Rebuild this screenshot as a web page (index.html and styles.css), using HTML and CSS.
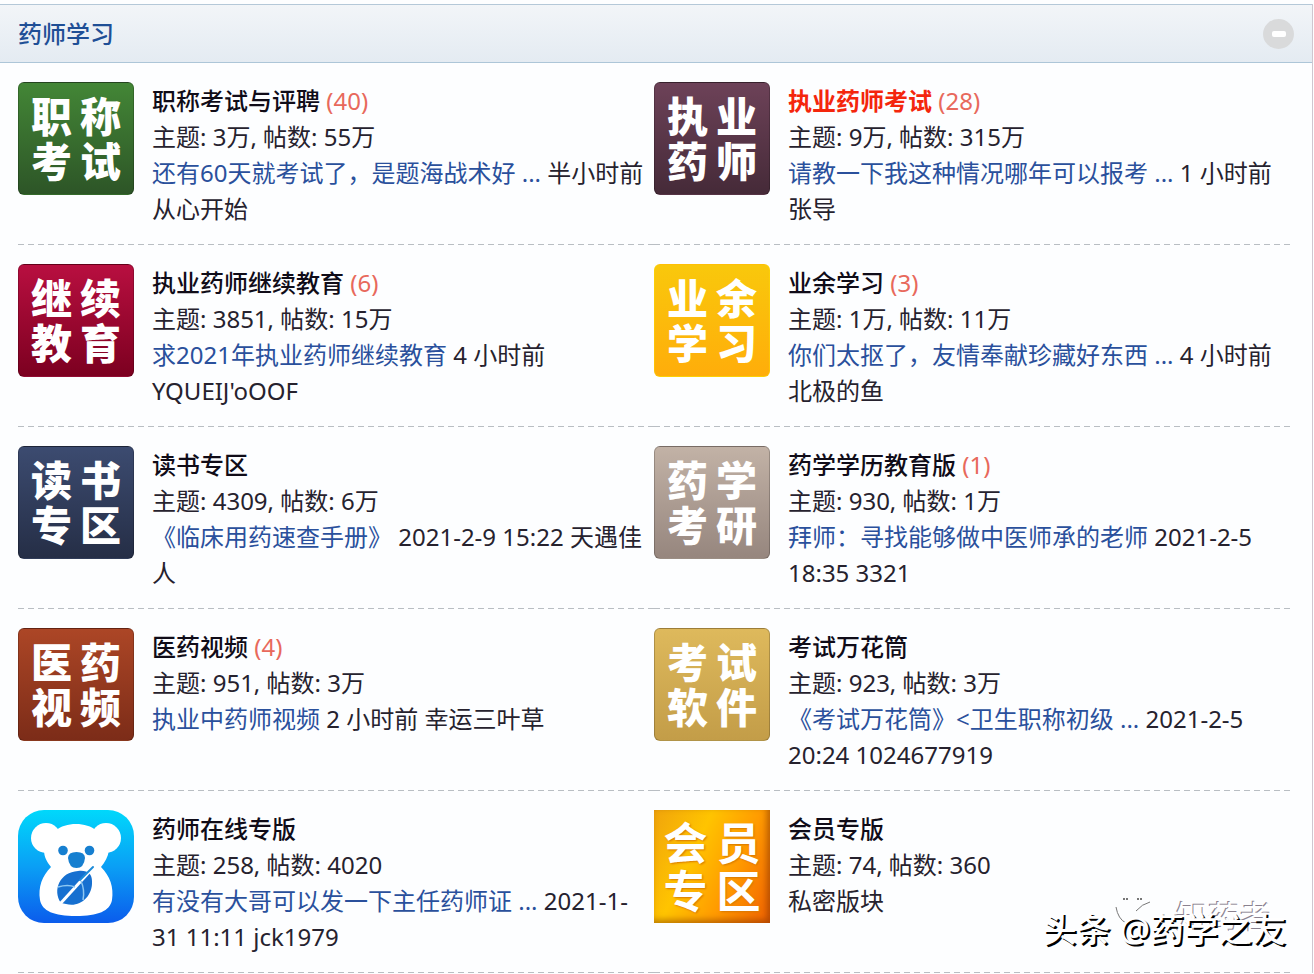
FILE: index.html
```
<!DOCTYPE html>
<html lang="zh-CN">
  <head>
    <meta charset="UTF-8" />
    <meta name="viewport" content="width=device-width, initial-scale=1.0" />
    <title>药师学习</title>
    <link rel="stylesheet" href="styles.css">
  </head>
  <body>
    <div class="category">
      <div class="category-head">
        <h2><a href="#">药师学习</a></h2>
        <button class="collapse" type="button" aria-label="收起"></button>
      </div>
      <ul class="forums">
        <li class="forum">
          <a class="tile green" href="#"><span>职</span><span>称</span><span>考</span><span>试</span></a>
          <div class="info">
            <h3><a href="#">职称考试与评聘</a> <em>(40)</em></h3>
            <p>主题: 3万, 帖数: 55万</p>
            <p><a class="last" href="#">还有60天就考试了，是题海战术好 ...</a> 半小时前 <a href="#">从心开始</a></p>
          </div>
        </li>
        <li class="forum">
          <a class="tile plum" href="#"><span>执</span><span>业</span><span>药</span><span>师</span></a>
          <div class="info">
            <h3><a class="hot" href="#">执业药师考试</a> <em>(28)</em></h3>
            <p>主题: 9万, 帖数: 315万</p>
            <p><a class="last" href="#">请教一下我这种情况哪年可以报考 ...</a> 1 小时前 <a href="#">张导</a></p>
          </div>
        </li>
        <li class="forum">
          <a class="tile crimson" href="#"><span>继</span><span>续</span><span>教</span><span>育</span></a>
          <div class="info">
            <h3><a href="#">执业药师继续教育</a> <em>(6)</em></h3>
            <p>主题: 3851, 帖数: 15万</p>
            <p><a class="last" href="#">求2021年执业药师继续教育</a> 4 小时前 <a href="#">YQUEIJ'oOOF</a></p>
          </div>
        </li>
        <li class="forum">
          <a class="tile yellow" href="#"><span>业</span><span>余</span><span>学</span><span>习</span></a>
          <div class="info">
            <h3><a href="#">业余学习</a> <em>(3)</em></h3>
            <p>主题: 1万, 帖数: 11万</p>
            <p><a class="last" href="#">你们太抠了，友情奉献珍藏好东西 ...</a> 4 小时前 <a href="#">北极的鱼</a></p>
          </div>
        </li>
        <li class="forum">
          <a class="tile navy" href="#"><span>读</span><span>书</span><span>专</span><span>区</span></a>
          <div class="info">
            <h3><a href="#">读书专区</a></h3>
            <p>主题: 4309, 帖数: 6万</p>
            <p><a class="last" href="#">《临床用药速查手册》</a> 2021-2-9 15:22 <a href="#">天遇佳人</a></p>
          </div>
        </li>
        <li class="forum">
          <a class="tile taupe" href="#"><span>药</span><span>学</span><span>考</span><span>研</span></a>
          <div class="info">
            <h3><a href="#">药学学历教育版</a> <em>(1)</em></h3>
            <p>主题: 930, 帖数: 1万</p>
            <p><a class="last" href="#">拜师：寻找能够做中医师承的老师</a> 2021-2-5 18:35 <a href="#">3321</a></p>
          </div>
        </li>
        <li class="forum">
          <a class="tile rust" href="#"><span>医</span><span>药</span><span>视</span><span>频</span></a>
          <div class="info">
            <h3><a href="#">医药视频</a> <em>(4)</em></h3>
            <p>主题: 951, 帖数: 3万</p>
            <p><a class="last" href="#">执业中药师视频</a> 2 小时前 <a href="#">幸运三叶草</a></p>
          </div>
        </li>
        <li class="forum">
          <a class="tile gold" href="#"><span>考</span><span>试</span><span>软</span><span>件</span></a>
          <div class="info">
            <h3><a href="#">考试万花筒</a></h3>
            <p>主题: 923, 帖数: 3万</p>
            <p><a class="last" href="#">《考试万花筒》&lt;卫生职称初级 ...</a> 2021-2-5 20:24 <a href="#">1024677919</a></p>
          </div>
        </li>
        <li class="forum">
          <a class="logo" href="#" aria-label="药师在线专版">
            <svg width="116" height="113" viewBox="0 0 116 113">
              <defs>
                <linearGradient id="sky" x1="0" y1="0" x2="0" y2="1">
                  <stop offset="0" stop-color="#00d8fb" />
                  <stop offset="0.5" stop-color="#0a9ff5" />
                  <stop offset="1" stop-color="#0b5cec" />
                </linearGradient>
              </defs>
              <rect width="116" height="113" rx="26" fill="url(#sky)" />
              <circle cx="28" cy="28" r="15" fill="#fff" />
              <circle cx="88" cy="28" r="15" fill="#fff" />
              <path d="M58 14C66 14 73 16 79 21L91 40C90 47 87 52 83 57C92 66 96 77 94 90C92 101 80 106 58 106C36 106 24 101 22 90C20 77 24 66 33 57C29 52 26 47 26 40L37 21C43 16 50 14 58 14Z" fill="#fff" />
              <circle cx="45" cy="40.500" r="4.800" fill="#167fd0" />
              <circle cx="71.500" cy="40.500" r="4.800" fill="#167fd0" />
              <path d="M50 48Q50 42 58.500 42Q67 42 67 48Q66 58 58.500 58Q51 58 50 48Z" fill="#167fd0" />
              <path d="M43 93C34 80 42 62 60 61C70 60 74 64 74 71C75 87 61 98 48 94Z" fill="#1670d0" />
              <path d="M42 94L73 60" stroke="#fff" stroke-width="3" fill="none" />
              <path d="M57 77Q50 74 40 77M63 71Q67 80 65 90" stroke="#8ec8f2" stroke-width="1.500" fill="none" />
              <path d="M62 70L75 57" stroke="#1b8bd8" stroke-width="2" stroke-linecap="round" />
            </svg>
          </a>
          <div class="info">
            <h3><a href="#">药师在线专版</a></h3>
            <p>主题: 258, 帖数: 4020</p>
            <p><a class="last" href="#">有没有大哥可以发一下主任药师证 ...</a> 2021-1-31 11:11 <a href="#">jck1979</a></p>
          </div>
        </li>
        <li class="forum">
          <a class="tile orange" href="#"><span>会</span><span>员</span><span>专</span><span>区</span></a>
          <div class="info">
            <h3><a href="#">会员专版</a></h3>
            <p>主题: 74, 帖数: 360</p>
            <p>私密版块</p>
          </div>
        </li>
      </ul>
      <div class="watermark">
        <div class="mark-back">
          <svg width="44" height="36" viewBox="0 0 44 36" fill="none" stroke="#777" stroke-width="1">
            <path d="M2 10Q4 22 12 26M22 14Q28 7 36 5" />
            <path d="M9 2h5M23 2h5" stroke-width="2" stroke-dasharray="2 1" />
          </svg>
          <span>知药者</span>
        </div>
        <div class="mark-front">头条 @药学之友</div>
      </div>
    </div>
  </body>
</html>
```
FILE: styles.css
```
* {
  box-sizing: border-box;
}
body {
  margin: 0;
  padding-top: 4px;
  background-color: #fdfeff;
  color: #26222e;
  font-family: "Noto Sans", "Noto Sans CJK SC", sans-serif;
  font-size: 24px;
  line-height: 36px;
}
a {
  color: inherit;
  text-decoration: none;
}
a:hover {
  text-decoration: underline;
}
h2,
h3,
p,
ul {
  margin: 0;
  padding: 0;
}
.category {
  position: relative;
  margin-right: 1px;
  border-right: 1px solid #cfc6cf;
}
.category-head {
  display: flex;
  justify-content: space-between;
  align-items: center;
  height: 59px;
  padding: 0 18px;
  border-top: 1px solid #b4c8d8;
  border-bottom: 1px solid #adc6d8;
  background: linear-gradient(#f2f5f8, #e4ebf2);
}
.category-head h2 {
  color: #1f4f96;
  font-size: 24px;
  font-weight: 500;
}
.collapse {
  display: flex;
  justify-content: center;
  align-items: center;
  width: 31px;
  height: 30px;
  padding: 0;
  border: none;
  border-radius: 50%;
  background-color: #d9dadb;
  cursor: pointer;
}
.collapse::before {
  content: "";
  width: 14px;
  height: 6px;
  border-radius: 2px;
  background-color: #fff;
}
.forums {
  display: grid;
  grid-template-columns: 1fr 1fr;
  padding: 0 22px 0 18px;
  list-style: none;
}
.forum {
  display: flex;
  align-items: flex-start;
  gap: 18px;
  padding: 19px 0 18px;
  /* long dashes along the bottom edge */
  background: repeating-linear-gradient(90deg, #b9bec3 0 6px, transparent 6px 10px) left bottom / 100% 1px no-repeat;
}
.info {
  flex: 1;
  min-width: 0;
  margin-right: 4px;
  padding-top: 1px;
}
.info h3 {
  font-size: 24px;
  font-weight: 500;
  color: #100c18;
}
.info em {
  color: #e8695c;
  font-style: normal;
  font-weight: 400;
}
.info .hot {
  color: #f4260c;
  font-weight: 700;
}
.info .last {
  color: #2a509c;
}
.logo {
  display: flex;
  flex: none;
}
.tile {
  display: grid;
  flex: none;
  grid-template-columns: 42px 42px;
  grid-auto-rows: 45px;
  column-gap: 7px;
  justify-content: center;
  align-content: center;
  width: 116px;
  height: 113px;
  padding-bottom: 4px;
  border: 1px solid rgba(0, 0, 0, 0.2);
  border-radius: 6px;
  color: #fff;
  font-family: "Noto Sans CJK SC", sans-serif;
  font-size: 41px;
  font-weight: 900;
  line-height: 45px;
  text-align: center;
}
.tile:hover {
  text-decoration: none;
}
.green {
  background: linear-gradient(#438636, #2d5527);
}
.plum {
  background: linear-gradient(#6d4258, #452a38);
}
.crimson {
  background: linear-gradient(#b80f40, #7c0020);
}
.yellow {
  border-color: rgba(255, 220, 0, 0.4);
  background: linear-gradient(#f9c80c, #ffad0a);
}
.navy {
  background: linear-gradient(#3c4b70, #252e46);
}
.taupe {
  background: linear-gradient(#c2b2a6, #96867e);
}
.rust {
  background: linear-gradient(#ac4626, #7c2c18);
}
.gold {
  background: linear-gradient(#deb95c, #c39d48);
}
.orange {
  grid-template-columns: 46px 46px;
  grid-auto-rows: 48px;
  border: none;
  border-radius: 0;
  background: linear-gradient(115deg, #f0a40c, #ffc400 35%, #ff9a00 65%, #f06000);
  box-shadow: inset -3px -3px 6px rgba(120, 50, 0, 0.5);
  font-size: 44px;
  font-weight: 700;
  line-height: 48px;
  text-shadow: 1px 1px 2px #d87800;
}
.watermark {
  position: absolute;
  right: 26px;
  bottom: 24px;
  line-height: 40px;
  pointer-events: none;
}
.mark-front {
  position: relative;
  color: #fff;
  font-size: 34px;
  font-weight: 500;
  text-shadow: 2px 2px 0 #000;
}
.mark-back {
  position: absolute;
  right: 14px;
  bottom: 12px;
  display: flex;
  gap: 18px;
  color: #fff;
  font-size: 32px;
  text-shadow: -1px -1px 0 #8a8290;
}
```
